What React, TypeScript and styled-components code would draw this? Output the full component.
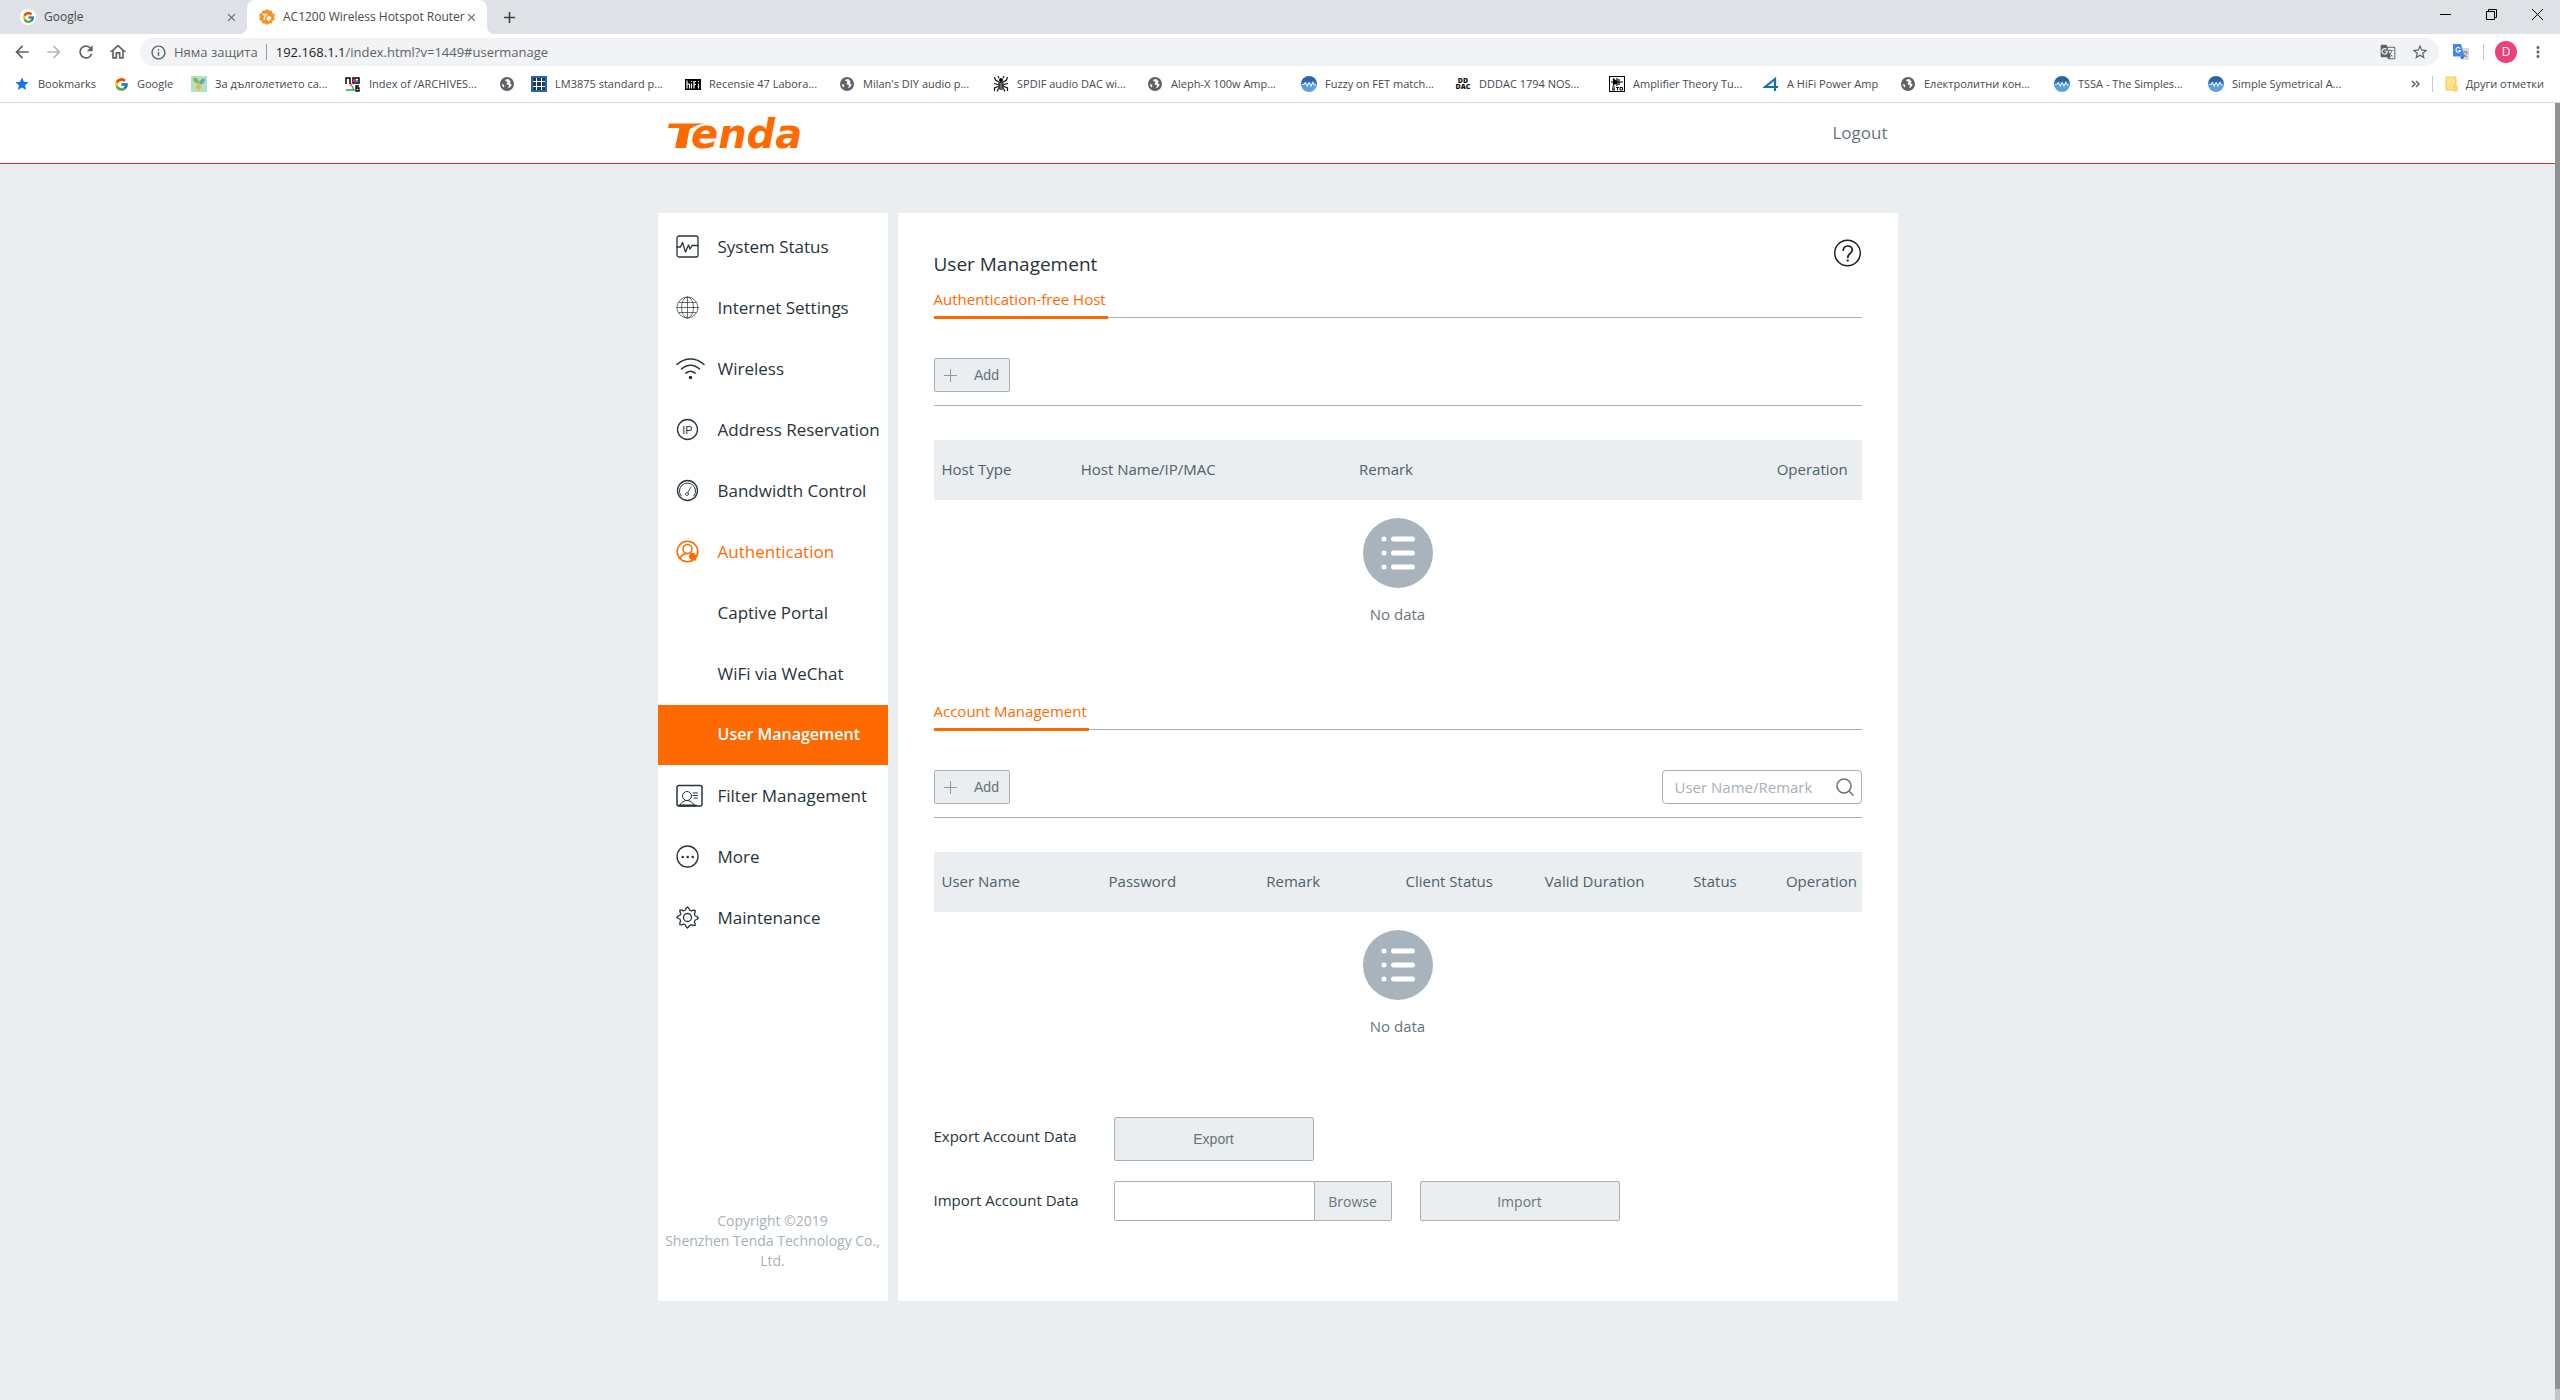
import React from "react";
import styled, { createGlobalStyle, css } from "styled-components";
import { FcGoogle } from "react-icons/fc";
import {
  MdArrowBack,
  MdArrowForward,
  MdRefresh,
  MdOutlineHome,
  MdInfoOutline,
  MdGTranslate,
  MdStarBorder,
  MdStar,
  MdMoreVert,
  MdClose,
  MdAdd,
} from "react-icons/md";

const color = {
  orange: "#ff6a00",
  page: "#eaeef1",
  line: "#a6b1ba",
  ink: "#27343b",
  muted: "#67737b",
  head: "#50606a",
  chrome: "#dee1e6",
  chromeText: "#45494d",
  chromeIcon: "#5f6368",
};

const GlobalStyle = createGlobalStyle`
  * { box-sizing: border-box; }
  body {
    margin: 0;
    background: ${color.page};
    color: ${color.ink};
    font-family: "Open Sans", "Noto Sans", sans-serif;
  }
  button, input { font: inherit; color: inherit; }
  a { color: inherit; text-decoration: none; }
  h1, h2, p, ul { margin: 0; padding: 0; }
  ul { list-style: none; }
  svg { display: block; flex: none; }
`;

const Window = styled.div`
  min-height: 100vh;
  display: flex;
  flex-direction: column;
`;

/* ---------- browser frame ---------- */

const TabStrip = styled.header`
  height: 34px;
  display: flex;
  background: ${color.chrome};
  font-size: 12px;
  color: ${color.chromeText};
`;

const BrowserTab = styled.div<{ $active?: boolean }>`
  position: relative;
  width: ${(p) => (p.$active ? 240 : 247)}px;
  padding: 0 9px 0 ${(p) => (p.$active ? 12 : 20)}px;
  display: flex;
  align-items: center;
  ${(p) =>
    p.$active &&
    css`
      background: #fff;
      border-radius: 8px 8px 0 0;
      &::before,
      &::after {
        content: "";
        position: absolute;
        bottom: 0;
        width: 8px;
        height: 8px;
      }
      &::before {
        right: 100%;
        background: radial-gradient(circle at 0 0, transparent 8px, #fff 8px);
      }
      &::after {
        left: 100%;
        background: radial-gradient(circle at 100% 0, transparent 8px, #fff 8px);
      }
    `}
`;

const TabTitle = styled.span`
  flex: 1;
  margin-left: 8px;
  line-height: 24px;
  white-space: nowrap;
`;

const IconButton = styled.button<{ $w?: number }>`
  width: ${(p) => p.$w ?? 32}px;
  height: 28px;
  flex: none;
  padding: 0;
  border: 0;
  background: none;
  color: ${color.chromeIcon};
  display: flex;
  align-items: center;
  justify-content: center;
`;

const FaviconDisc = styled.span`
  width: 16px;
  height: 16px;
  border-radius: 50%;
  background: #fff;
  display: grid;
  place-items: center;
`;

const NewTab = styled(IconButton)`
  margin: 3px 0 0 6px;
  color: #3c4043;
`;

const WindowControls = styled.div`
  margin-left: auto;
  display: flex;
`;

const Toolbar = styled.div`
  height: 36px;
  padding: 0 12px 0 6px;
  background: #fff;
  display: flex;
  align-items: center;
`;

const Omnibox = styled.div`
  flex: 1;
  height: 28px;
  margin-left: 6px;
  padding: 0 3px 0 10px;
  border-radius: 14px;
  background: #f1f3f4;
  color: ${color.chromeIcon};
  font-size: 13px;
  display: flex;
  align-items: center;
`;

const Security = styled.span`
  margin-left: 7px;
  padding-right: 8px;
  line-height: 16px;
  border-right: 1px solid #9a9da1;
`;

const AddressText = styled.span`
  flex: 1;
  margin-left: 9px;
  b {
    font-weight: 400;
    color: #202124;
  }
`;

const Separator = styled.span`
  width: 1px;
  height: 16px;
  background: #c6c9cd;
`;

const Avatar = styled.button`
  width: 22px;
  height: 22px;
  margin: 0 11px;
  padding: 0;
  border: 0;
  border-radius: 50%;
  background: #ec407a;
  color: #fff;
  font-size: 12px;
  line-height: 22px;
`;

const BookmarkBar = styled.nav`
  height: 33px;
  padding: 0 16px 4px 14px;
  background: #fff;
  border-bottom: 1px solid #d8dadd;
  display: flex;
  align-items: center;
  font-size: 11px;
  color: ${color.chromeText};
`;

const Bookmark = styled.a<{ $w?: number }>`
  width: ${(p) => (p.$w ? `${p.$w}px` : "auto")};
  flex: none;
  display: flex;
  align-items: center;
  gap: 8px;
  line-height: 20px;
  white-space: nowrap;
`;

const BookmarkTail = styled.div`
  margin-left: auto;
  display: flex;
  align-items: center;
  gap: 12px;
`;

/* ---------- router page ---------- */

const Viewport = styled.div`
  flex: 1;
  display: flex;
`;

const Scroller = styled.div`
  flex: 1;
  min-width: 0;
`;

const ScrollTrack = styled.div`
  width: 5px;
  padding-bottom: 11px;
  background: #c3c6c8;
  display: flex;
`;

const ScrollThumb = styled.div`
  flex: 1;
  background: #8f9193;
`;

const SiteHeader = styled.header`
  background: #fff;
  border-bottom: 1px solid #d9282f;
`;

const HeaderInner = styled.div`
  max-width: 1240px;
  height: 60px;
  margin: 0 auto;
  padding: 0 10px;
  display: flex;
  align-items: center;
  justify-content: space-between;
`;

const Logout = styled.a`
  padding-bottom: 2px;
  font-size: 17px;
  color: ${color.muted};
`;

const Shell = styled.div`
  max-width: 1240px;
  margin: 49px auto 0;
  display: flex;
  gap: 10px;
`;

const Sidebar = styled.aside`
  width: 230px;
  flex: none;
  padding: 4px 0 30px;
  background: #fff;
  display: flex;
  flex-direction: column;
  justify-content: space-between;
`;

const Menu = styled.ul`
  display: grid;
  gap: 1px;
`;

const MenuLink = styled.a<{ $state?: "open" | "active" }>`
  height: 60px;
  padding-left: 18px;
  display: grid;
  grid-template-columns: 42px 1fr;
  align-items: center;
  font-size: ${(p) => (p.$state === "active" ? 16 : 17)}px;
  white-space: nowrap;
  color: ${(p) => (p.$state === "active" ? "#fff" : p.$state === "open" ? color.orange : color.ink)};
  background: ${(p) => (p.$state === "active" ? color.orange : "transparent")};
  font-weight: ${(p) => (p.$state === "active" ? 600 : 400)};
  span {
    grid-column: 2;
    padding-bottom: 2px;
  }
`;

const Copyright = styled.p`
  text-align: center;
  font-size: 14px;
  line-height: 20px;
  color: ${color.line};
`;

const Content = styled.main`
  flex: 1;
  min-width: 0;
  padding: 26px 36px 80px;
  background: #fff;
`;

const ContentHeader = styled.div`
  height: 39px;
  display: flex;
  justify-content: space-between;
`;

const Title = styled.h1`
  align-self: flex-end;
  font-size: 19px;
  line-height: 28px;
  font-weight: 400;
`;

const HelpButton = styled.button`
  width: 28px;
  height: 28px;
  padding: 0;
  border: 0;
  background: none;
`;

const Section = styled.section`
  padding: 10px 0 63px;
`;

const SectionTab = styled.div`
  display: flex;
  align-items: flex-end;
  &::after {
    content: "";
    flex: 1;
    height: 1px;
    margin-bottom: 1px;
    background: ${color.line};
  }
`;

const SectionTitle = styled.h2`
  padding: 0 2px 6px 0;
  border-bottom: 3px solid ${color.orange};
  font-size: 15px;
  line-height: 22px;
  font-weight: 400;
  color: ${color.orange};
`;

const Actions = styled.div`
  margin: 39px 0 34px;
  padding-bottom: 13px;
  border-bottom: 1px solid ${color.line};
  display: flex;
  justify-content: space-between;
`;

const Button = styled.button<{ $w: number; $h: number }>`
  width: ${(p) => p.$w}px;
  height: ${(p) => p.$h}px;
  padding: 0;
  border: 1px solid ${color.line};
  border-radius: 2px;
  background: ${color.page};
  color: ${color.muted};
  font: 14px "Liberation Sans", Arial, sans-serif;
  display: flex;
  align-items: center;
  justify-content: center;
  gap: 17px;
`;

const FileButton = styled(Button)`
  font: 14px "Open Sans", "Noto Sans", sans-serif;
`;

const SearchBox = styled.div`
  width: 200px;
  height: 34px;
  padding: 0 7px 0 12px;
  border: 1px solid ${color.line};
  border-radius: 4px;
  display: flex;
  align-items: center;
  input {
    flex: 1;
    min-width: 0;
    padding: 0;
    border: 0;
    outline: none;
    background: none;
    font-size: 15px;
  }
  input::placeholder {
    color: ${color.line};
    opacity: 1;
  }
  button {
    padding: 0;
    border: 0;
    background: none;
  }
`;

const Table = styled.table`
  width: 100%;
  table-layout: fixed;
  border-collapse: collapse;
  th {
    height: 60px;
    padding: 0 0 2px 8px;
    background: ${color.page};
    font-size: 15px;
    font-weight: 400;
    text-align: left;
    white-space: nowrap;
    color: ${color.head};
  }
  td {
    padding: 0;
  }
`;

const HeadCell = styled.th<{ $share: number }>`
  width: ${(p) => p.$share}%;
`;

const Empty = styled.div`
  padding: 18px 0 2px;
  display: flex;
  flex-direction: column;
  align-items: center;
  gap: 15px;
  font-size: 15px;
  line-height: 22px;
  color: ${color.muted};
`;

const Transfer = styled.form`
  margin-top: 15px;
  display: grid;
  grid-template-columns: 180px 1fr;
  row-gap: 20px;
  label {
    font-size: 15px;
    line-height: 38px;
  }
`;

const FileRow = styled.div`
  display: flex;
  gap: 28px;
`;

const FilePicker = styled.div`
  display: flex;
  input {
    width: 201px;
    height: 40px;
    padding: 0 8px;
    border: 1px solid ${color.line};
    border-radius: 2px 0 0 2px;
    background: #fff;
    outline: none;
  }
  button {
    border-left: 0;
    border-radius: 0 2px 2px 0;
  }
`;

/* ---------- drawings ---------- */

const TendaFavicon = () => (
  <svg width="16" height="16" viewBox="0 0 16 16">
    <path
      d="M8 0l2 1.6L12.6 1.500l.8 2.500L16 5.500 15 8l1 2.500-2.600 1.500-.8 2.500L10 14.400 8 16l-2-1.600-2.600.1-.8-2.500L0 10.500 1 8 0 5.500 2.600 4l.8-2.500L6 1.600z"
      fill="#f7931e"
    />
    <path d="M3.500 5.500h5M6.200 5.500L5.200 11M8 9.500h3.500c.5-2-2.800-2-3.200 0-.3 1.500 1.500 2 2.800 1.200" fill="none" stroke="#fff" strokeWidth="1.500" />
  </svg>
);

const GlobeDot = () => (
  <svg width="16" height="16" viewBox="0 0 16 16">
    <circle cx="8" cy="8" r="7" fill={color.chromeIcon} />
    <path d="M9.500 3c-2 .2-3.600.4-3.400 1.600.2.900 2 .6 2.300 1.500.3.900-1 1-.8 1.800.3 1 2.100.4 2.400 1.500.2.900-.8 1.500-1 2.600 2.200-.3 3.600-2 3.600-3.900-.8 0-1.700-.2-1.700-1s1-.9.600-1.800c-.3-.8-1.600-.8-2-2.300zM3 8c1.200.1 2.200.7 2.300 1.600.1.800-.5 1-.6 1.800C3.600 10.600 3 9.400 3 8z" fill="#fff" />
  </svg>
);

const WaveDot = () => (
  <svg width="16" height="16" viewBox="0 0 16 16">
    <defs>
      <linearGradient id="wave" x1="0" y1="0" x2="0" y2="1">
        <stop offset="0.300" stopColor="#2c64a8" />
        <stop offset="0.700" stopColor="#5ba3dc" />
      </linearGradient>
    </defs>
    <circle cx="8" cy="8" r="8" fill="url(#wave)" />
    <path d="M1 8.500h2l1.300-1.800L6.200 10l1.900-3.300L10 10l1.900-3.600L13.300 9H15" fill="none" stroke="#e4f1fb" strokeWidth="1.200" />
  </svg>
);

const ButterflyIcon = () => (
  <svg width="16" height="16" viewBox="0 0 16 16">
    <rect width="16" height="16" fill="#b5dfc6" />
    <path d="M2 2c4-1 6 2 6 5-3 1-6-1-6-5z" fill="#8fb63f" />
    <path d="M14 3c-4-1-6 2-6 5 3 1 6-1 6-5z" fill="#5fa8c4" />
    <path d="M8 7c-3 1-4 6-1 8 4-1 4-6 1-8z" fill="#d9c24a" />
  </svg>
);

const ArchiveIcon = () => (
  <svg width="16" height="16" viewBox="0 0 16 16">
    <path d="M1 8V2h4v6M8 2h6v5H8z" fill="none" stroke="#000" strokeWidth="1.500" />
    <path d="M8 3h3v3H8z" fill="#e0218a" />
    <path d="M11 4h2v2h-2z" fill="#18b4e8" />
    <path d="M5 10l3-3" stroke="#e33" strokeWidth="1.200" />
    <path d="M1 14h8l-2-4" fill="none" stroke="#2aa84a" strokeWidth="1.300" />
    <path d="M14 10h-3v5h3v-3h-3" fill="none" stroke="#000" strokeWidth="1.300" />
  </svg>
);

const GridIcon = () => (
  <svg width="16" height="16" viewBox="0 0 16 16">
    <rect width="16" height="16" fill="#2f62ad" />
    <rect x="2" y="2" width="12" height="12" fill="#fff" />
    <path d="M2 2h3v3H2zM6 2h4v3H6zM11 2h3v3h-3zM2 6h3v4H2zM6 6h4v4H6zM11 6h3v4h-3zM2 11h3v3H2zM6 11h4v3H6zM11 11h3v3h-3z" fill="#173a6d" />
  </svg>
);

const HifiIcon = () => (
  <svg width="16" height="16" viewBox="0 0 16 16">
    <rect y="3" width="16" height="11" fill="#000" />
    <path d="M2 4.500v8M2 8h2.500v4.500M6.500 7.500v5M6.500 5v1M9 12.500v-7h2M9 8.500h2M13.500 7.500v5M13.500 5v1" fill="none" stroke="#fff" strokeWidth="1.200" />
  </svg>
);

const SpiderIcon = () => (
  <svg width="16" height="16" viewBox="0 0 16 16">
    <ellipse cx="8" cy="9.500" rx="3" ry="4.500" fill="#333a4a" />
    <circle cx="8" cy="4" r="2" fill="#111" />
    <path d="M6 6L2.500 4 1.500 1M10 6l3.500-2 1-3M5 8.500L1 7.500M11 8.500l4-1M5 10.500L1.500 12v3M11 10.500l3.500 1.500v3M5.500 12.500L4 15.500M10.500 12.500l1.500 3M6 2L5 0M10 2l1-2" fill="none" stroke="#111" strokeWidth="1.200" />
    <path d="M8 7v6" stroke="#a9a06a" />
  </svg>
);

const DddacIcon = () => (
  <svg width="16" height="16" viewBox="0 0 16 16" fill="#111" textAnchor="middle" fontSize="7" fontFamily="Open Sans" fontWeight="800">
    <text x="8" y="7">DD</text>
    <text x="8" y="13">DAC</text>
  </svg>
);

const EtoIcon = () => (
  <svg width="16" height="16" viewBox="0 0 16 16">
    <rect x="0.500" y="0.500" width="15" height="15" fill="#fff" stroke="#000" />
    <path d="M2 6h12M8 2v8M4.500 3v6L8 6zM10 3v6" fill="#000" stroke="#000" strokeWidth="1.200" />
    <path d="M3 11h3M3 12.800h3M3 14h3M7 11.500h3M8.500 11.500v3M11 11.500h2.500v2.500H11z" fill="none" stroke="#000" />
  </svg>
);

const FourIcon = () => (
  <svg width="16" height="16" viewBox="0 0 16 16">
    <path d="M12 15V3L2 11h13" fill="none" stroke="#1b6f9c" strokeWidth="2.200" />
  </svg>
);

const FolderIcon = () => (
  <svg width="13" height="16" viewBox="0 0 13 16">
    <path d="M1 1h10v13H1z" fill="#ffe28a" stroke="#efc94f" />
    <path d="M9 10h3v5H9z" fill="#ffe28a" stroke="#efc94f" />
  </svg>
);

const TranslateExtension = () => (
  <svg width="18" height="18" viewBox="0 0 18 18">
    <path d="M7 5h10v12H10z" fill="#d7dadd" />
    <path d="M10.500 9h5M13 8v1M15 9c-.6 2.500-2 4-4 5M11.500 11c.8 1.500 2 2.500 3.500 3" fill="none" stroke="#7b8085" />
    <path d="M1 1h8l3.500 12.500H1z" fill="#4285f4" />
    <path d="M8 13.500h4.500L10 16.500z" fill="#3353c8" />
    <path d="M8.300 5.600A2.300 2.300 0 1 0 8.500 7.500H6.500" fill="none" stroke="#fff" strokeWidth="1.200" />
  </svg>
);

const TendaLogo = () => (
  <svg width="142" height="50" viewBox="0 -7 142 50" role="img" aria-label="Tenda" fill={color.orange}>
    <path d="M1 8.500h36c-6 .8-10 2.300-13 4.500H0z" />
    <path d="M12 10h14c-3 2-4.500 4-5 7l-3 16H7z" />
    <text x="23" y="33" fontSize="40" fontFamily="DejaVu Sans" fontStyle="italic" fontWeight="700">enda</text>
  </svg>
);

const LineIcon = ({ w = 24, children }: { w?: number; children: React.ReactNode }) => (
  <svg width={w} height="24" viewBox={`0 0 ${w} 24`} fill="none" stroke="currentColor" strokeWidth="1.300" strokeLinecap="round" strokeLinejoin="round">
    {children}
  </svg>
);

const StatusIcon = () => (
  <LineIcon>
    <rect x="1" y="1" width="21" height="21" rx="2" />
    <path d="M1 12h3.500l2-4.500 3 9.500 3-7 1.500 4 2-3.500h6" />
  </LineIcon>
);
const GlobeIcon = () => (
  <LineIcon>
    <g strokeWidth="0.700">
      <circle cx="11.500" cy="11.500" r="10.500" />
      <ellipse cx="11.500" cy="11.500" rx="6" ry="10.500" />
      <path d="M11.500 1v21M1 11.500h21M3 6.500h17M3 16.500h17" />
    </g>
  </LineIcon>
);
const WifiIcon = () => (
  <LineIcon w={30}>
    <path d="M1 7.500c8-7.500 19-7.500 27 0M5.500 12c5.500-5 12.500-5 18 0M10 16.200c3-2.500 6-2.500 9 0" strokeWidth="1.500" />
    <circle cx="14.500" cy="20.500" r="1.100" fill="currentColor" />
  </LineIcon>
);
const IpIcon = () => (
  <LineIcon>
    <circle cx="11.500" cy="11.500" r="10" />
    <text x="11.500" y="15.500" fontSize="11" fontFamily="Liberation Sans" textAnchor="middle" fill="currentColor" stroke="none">IP</text>
  </LineIcon>
);
const GaugeIcon = () => (
  <LineIcon>
    <circle cx="11.500" cy="11.500" r="10" />
    <path d="M5.500 17c-1.400-1.200-2-3-2-5a8 8 0 0 1 16 0c0 2-.6 3.800-2 5" strokeWidth="1" />
    <path d="M12 13.300L15 8" strokeWidth="0.800" />
    <circle cx="11" cy="15" r="1.500" strokeWidth="0.800" />
  </LineIcon>
);
const AuthIcon = () => (
  <LineIcon>
    <circle cx="11.500" cy="11.500" r="10.300" strokeWidth="1.600" />
    <circle cx="11.500" cy="9" r="4.500" strokeWidth="1.500" />
    <path d="M4 18.500c1.500-3.500 4.500-5 8-5" strokeWidth="1.500" />
    <circle cx="16.500" cy="16.500" r="2.800" fill="currentColor" />
    <path d="M18 18l1.500 2" strokeWidth="1.500" />
  </LineIcon>
);
const CardIcon = () => (
  <LineIcon w={28}>
    <rect x="1" y="1.500" width="25" height="20.500" rx="2" strokeWidth="1.500" />
    <g strokeWidth="1">
      <circle cx="11" cy="12" r="4.500" />
      <path d="M4 21c1.500-3 4-4.500 7-4.500s5.500 1.500 7 4.500M17 9h4.500M17 11.500h4.500M18 14h3.500" />
    </g>
    <path d="M3 21.500h17" strokeWidth="1.800" />
  </LineIcon>
);
const DotsIcon = () => (
  <LineIcon>
    <circle cx="11.500" cy="11.500" r="10.500" />
    <g fill="currentColor" stroke="none">
      <circle cx="6.700" cy="12" r="1.300" />
      <circle cx="11.700" cy="12" r="1.300" />
      <circle cx="16.700" cy="12" r="1.300" />
    </g>
  </LineIcon>
);
const GearIcon = () => (
  <LineIcon>
    <circle cx="11.500" cy="11.500" r="4" />
    <path
      d="M10 2.500L11.500 1 13 2.500l.5 1.600 2 .9 1.600-.8 2.100.1-.1 2.100-.8 1.600.9 2 1.600.5 1.500 1.500-1.500 1.500-1.600.5-.9 2 .8 1.600.1 1.700-2 .2-1.700-.8-2 .9L13 20.500 11.500 22 10 20.500l-.5-1.600-2-.9-1.600.8-2.100-.1.100-2.100.8-1.600-.9-2-1.600-.5L.8 11.500l1.500-1.500 1.600-.5.9-2L4 5.900 3.800 4.200l2.100-.1 1.600.8 2-.9z"
    />
  </LineIcon>
);

const HelpIcon = () => (
  <svg width="28" height="28" viewBox="0 0 28 28" fill="none" stroke="#1c1c1c" strokeWidth="1.400">
    <circle cx="13.500" cy="14" r="12.800" />
    <path d="M9.200 12c-.2-2.800 1.500-5 4.400-5s4.600 1.700 4.600 4c0 3.500-4.500 3.200-4.500 8" strokeWidth="1.700" />
    <path d="M12.700 20.500h2v2h-2z" fill="#1c1c1c" stroke="none" />
  </svg>
);

const PlusIcon = () => (
  <svg width="13" height="13" viewBox="0 0 13 13" fill="none" stroke="#8e989f">
    <path d="M0 6.500h13M6.500 0v13" />
  </svg>
);

const SearchIcon = () => (
  <svg width="18" height="18" viewBox="0 0 18 18" fill="none" stroke={color.muted} strokeWidth="1.500">
    <circle cx="8" cy="8" r="7" />
    <path d="M13 13l4.500 4.500" />
  </svg>
);

const ListDisc = () => (
  <svg width="70" height="70" viewBox="0 0 70 70">
    <circle cx="35" cy="35" r="35" fill="#a9b3bb" />
    {[21, 35, 49].map((y) => (
      <g key={y} fill="#fff">
        <circle cx="21" cy={y} r="2.500" />
        <rect x="28" y={y - 2.5} width="24" height="5" rx="2.500" />
      </g>
    ))}
  </svg>
);

/* ---------- data ---------- */

const bookmarks: { label?: string; icon: React.ReactNode; w: number }[] = [
  { label: "Bookmarks", icon: <MdStar size={16} color="#1a73e8" />, w: 100 },
  { label: "Google", icon: <FcGoogle size={15} />, w: 77 },
  { label: "За дълголетието са...", icon: <ButterflyIcon />, w: 154 },
  { label: "Index of /ARCHIVES...", icon: <ArchiveIcon />, w: 154 },
  { icon: <GlobeDot />, w: 32 },
  { label: "LM3875 standard p...", icon: <GridIcon />, w: 154 },
  { label: "Recensie 47 Labora...", icon: <HifiIcon />, w: 154 },
  { label: "Milan's DIY audio p...", icon: <GlobeDot />, w: 154 },
  { label: "SPDIF audio DAC wi...", icon: <SpiderIcon />, w: 154 },
  { label: "Aleph-X 100w Amp...", icon: <GlobeDot />, w: 154 },
  { label: "Fuzzy on FET match...", icon: <WaveDot />, w: 154 },
  { label: "DDDAC 1794 NOS...", icon: <DddacIcon />, w: 154 },
  { label: "Amplifier Theory Tu...", icon: <EtoIcon />, w: 154 },
  { label: "A HiFi Power Amp", icon: <FourIcon />, w: 137 },
  { label: "Електролитни кон...", icon: <GlobeDot />, w: 154 },
  { label: "TSSA - The Simples...", icon: <WaveDot />, w: 154 },
  { label: "Simple Symetrical A...", icon: <WaveDot />, w: 154 },
];

const menu: { label: string; icon?: React.ReactNode; state?: "open" | "active" }[] = [
  { label: "System Status", icon: <StatusIcon /> },
  { label: "Internet Settings", icon: <GlobeIcon /> },
  { label: "Wireless", icon: <WifiIcon /> },
  { label: "Address Reservation", icon: <IpIcon /> },
  { label: "Bandwidth Control", icon: <GaugeIcon /> },
  { label: "Authentication", icon: <AuthIcon />, state: "open" },
  { label: "Captive Portal" },
  { label: "WiFi via WeChat" },
  { label: "User Management", state: "active" },
  { label: "Filter Management", icon: <CardIcon /> },
  { label: "More", icon: <DotsIcon /> },
  { label: "Maintenance", icon: <GearIcon /> },
];

const hostColumns: [string, number][] = [
  ["Host Type", 15],
  ["Host Name/IP/MAC", 30],
  ["Remark", 45],
  ["Operation", 10],
];

const accountColumns: [string, number][] = [
  ["User Name", 18],
  ["Password", 17],
  ["Remark", 15],
  ["Client Status", 15],
  ["Valid Duration", 16],
  ["Status", 10],
  ["Operation", 9],
];

/* ---------- parts ---------- */

const EmptyTable = ({ columns }: { columns: [string, number][] }) => (
  <Table>
    <thead>
      <tr>
        {columns.map(([name, share]) => (
          <HeadCell key={name} $share={share}>
            {name}
          </HeadCell>
        ))}
      </tr>
    </thead>
    <tbody>
      <tr>
        <td colSpan={columns.length}>
          <Empty>
            <ListDisc />
            No data
          </Empty>
        </td>
      </tr>
    </tbody>
  </Table>
);

const AddButton = () => (
  <Button type="button" $w={76} $h={34}>
    <PlusIcon />
    Add
  </Button>
);

const BrowserFrame = () => (
  <>
    <TabStrip>
      <BrowserTab>
        <FaviconDisc>
          <FcGoogle size={13} />
        </FaviconDisc>
        <TabTitle>Google</TabTitle>
        <IconButton $w={13} aria-label="Close tab">
          <MdClose size={13} />
        </IconButton>
      </BrowserTab>
      <BrowserTab $active>
        <TendaFavicon />
        <TabTitle>AC1200 Wireless Hotspot Router</TabTitle>
        <IconButton $w={13} aria-label="Close tab">
          <MdClose size={13} />
        </IconButton>
      </BrowserTab>
      <NewTab aria-label="New tab">
        <MdAdd size={19} />
      </NewTab>
      <WindowControls>
        <IconButton $w={46} aria-label="Minimize">
          <svg width="11" height="11" stroke="#000"><path d="M0 5.500h11" /></svg>
        </IconButton>
        <IconButton $w={46} aria-label="Restore">
          <svg width="11" height="11" stroke="#000" fill="none"><path d="M0.500 2.500h8v8h-8zM2.500 2.500v-2h8v8h-2" /></svg>
        </IconButton>
        <IconButton $w={46} aria-label="Close">
          <svg width="11" height="11" stroke="#000"><path d="M0 0l11 11M11 0L0 11" /></svg>
        </IconButton>
      </WindowControls>
    </TabStrip>
    <Toolbar>
      <IconButton aria-label="Back"><MdArrowBack size={20} /></IconButton>
      <IconButton aria-label="Forward"><MdArrowForward size={20} opacity={0.45} /></IconButton>
      <IconButton aria-label="Reload"><MdRefresh size={20} /></IconButton>
      <IconButton aria-label="Home"><MdOutlineHome size={20} /></IconButton>
      <Omnibox>
        <MdInfoOutline size={17} />
        <Security>Няма защита</Security>
        <AddressText>
          <b>192.168.1.1</b>/index.html?v=1449#usermanage
        </AddressText>
        <IconButton aria-label="Translate"><MdGTranslate size={16} /></IconButton>
        <IconButton aria-label="Bookmark this page"><MdStarBorder size={18} /></IconButton>
      </Omnibox>
      <IconButton $w={44} aria-label="Translate extension"><TranslateExtension /></IconButton>
      <Separator />
      <Avatar aria-label="Profile">D</Avatar>
      <IconButton $w={20} aria-label="Menu"><MdMoreVert size={18} /></IconButton>
    </Toolbar>
    <BookmarkBar>
      {bookmarks.map((b, i) => (
        <Bookmark key={i} href="#" $w={b.w}>
          {b.icon}
          {b.label}
        </Bookmark>
      ))}
      <BookmarkTail>
        <svg width="9" height="8" fill="none" stroke={color.chromeIcon} strokeWidth="1.500"><path d="M1 1l3 3-3 3M5 1l3 3-3 3" /></svg>
        <Separator />
        <Bookmark href="#">
          <FolderIcon />
          Други отметки
        </Bookmark>
      </BookmarkTail>
    </BookmarkBar>
  </>
);

export default function App() {
  return (
    <Window>
      <GlobalStyle />
      <BrowserFrame />
      <Viewport>
        <Scroller>
          <SiteHeader>
            <HeaderInner>
              <TendaLogo />
              <Logout href="#">Logout</Logout>
            </HeaderInner>
          </SiteHeader>
          <Shell>
            <Sidebar>
              <Menu>
                {menu.map((m) => (
                  <li key={m.label}>
                    <MenuLink href="#" $state={m.state}>
                      {m.icon}
                      <span>{m.label}</span>
                    </MenuLink>
                  </li>
                ))}
              </Menu>
              <Copyright>
                Copyright ©2019
                <br />
                Shenzhen Tenda Technology Co., Ltd.
              </Copyright>
            </Sidebar>
            <Content>
              <ContentHeader>
                <Title>User Management</Title>
                <HelpButton aria-label="Help">
                  <HelpIcon />
                </HelpButton>
              </ContentHeader>
              <Section>
                <SectionTab>
                  <SectionTitle>Authentication-free Host</SectionTitle>
                </SectionTab>
                <Actions>
                  <AddButton />
                </Actions>
                <EmptyTable columns={hostColumns} />
              </Section>
              <Section>
                <SectionTab>
                  <SectionTitle>Account Management</SectionTitle>
                </SectionTab>
                <Actions>
                  <AddButton />
                  <SearchBox>
                    <input type="text" placeholder="User Name/Remark" aria-label="User Name/Remark" />
                    <button type="button" aria-label="Search">
                      <SearchIcon />
                    </button>
                  </SearchBox>
                </Actions>
                <EmptyTable columns={accountColumns} />
              </Section>
              <Transfer>
                <label htmlFor="export">Export Account Data</label>
                <Button id="export" type="button" $w={200} $h={44}>
                  Export
                </Button>
                <label htmlFor="import">Import Account Data</label>
                <FileRow>
                  <FilePicker>
                    <input id="import" type="text" readOnly />
                    <FileButton type="button" $w={77} $h={40}>
                      Browse
                    </FileButton>
                  </FilePicker>
                  <FileButton type="button" $w={200} $h={40}>
                    Import
                  </FileButton>
                </FileRow>
              </Transfer>
            </Content>
          </Shell>
        </Scroller>
        <ScrollTrack>
          <ScrollThumb />
        </ScrollTrack>
      </Viewport>
    </Window>
  );
}
